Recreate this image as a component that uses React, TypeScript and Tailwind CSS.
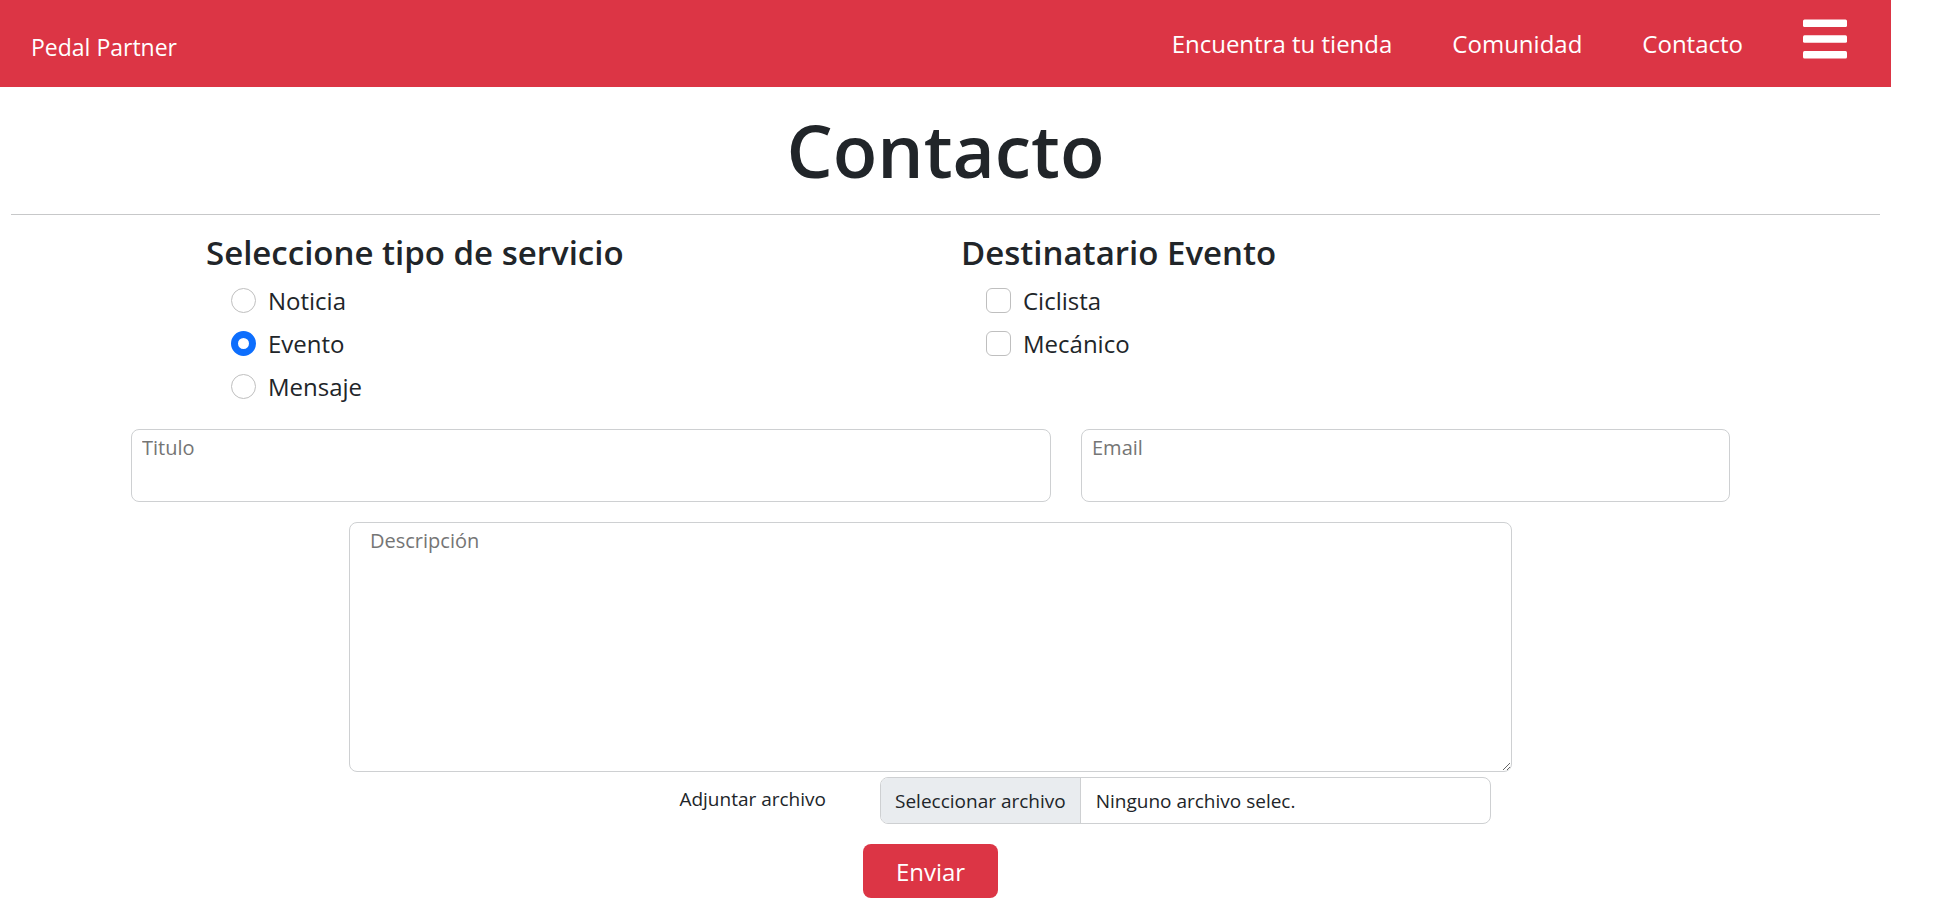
import { useState } from "react";

const NAV_LINKS = ["Encuentra tu tienda", "Comunidad", "Contacto"];
const SERVICES = ["Noticia", "Evento", "Mensaje"];
const RECIPIENTS = ["Ciclista", "Mecánico"];

function MenuIcon() {
  return (
    <svg viewBox="0 0 44 40" className="h-10 w-11" fill="currentColor" aria-hidden="true">
      <rect x="0" y="0.5" width="44" height="7.5" rx="1.5" />
      <rect x="0" y="16.2" width="44" height="7.5" rx="1.5" />
      <rect x="0" y="32" width="44" height="7.5" rx="1.5" />
    </svg>
  );
}

function Navbar() {
  return (
    <header className="flex h-[87px] items-start justify-between bg-[#dc3545] pr-11 pl-[31px] text-2xl leading-9 text-white">
      <a href="#inicio" className="pt-[29px] text-[23px] leading-9">
        Pedal Partner
      </a>
      <nav className="flex items-start gap-[60px]">
        {NAV_LINKS.map((label) => (
          <a key={label} href="#" className="pt-[26px]">
            {label}
          </a>
        ))}
        <button type="button" aria-label="Abrir menú" className="pt-[19px]">
          <MenuIcon />
        </button>
      </nav>
    </header>
  );
}

function ServiceOptions() {
  const [service, setService] = useState("Evento");
  return (
    <fieldset>
      <legend className="text-[33px] leading-10 font-semibold">Seleccione tipo de servicio</legend>
      <div className="flex flex-col pt-[7px] pl-[25px]">
        {SERVICES.map((name) => (
          <label key={name} className="flex h-[43px] items-start gap-3 text-2xl leading-[42px]">
            <input
              type="radio"
              name="servicio"
              checked={service === name}
              onChange={() => setService(name)}
              className="mt-2 size-[25px] shrink-0 appearance-none rounded-full border border-[#bfbfbf] bg-white checked:border-[7px] checked:border-[#0d6efd]"
            />
            {name}
          </label>
        ))}
      </div>
    </fieldset>
  );
}

function RecipientOptions() {
  return (
    <fieldset>
      <legend className="text-[33px] leading-10 font-semibold">Destinatario Evento</legend>
      <div className="flex flex-col pt-[7px] pl-[25px]">
        {RECIPIENTS.map((name) => (
          <label key={name} className="flex h-[43px] items-start gap-3 text-2xl leading-[42px]">
            <input
              type="checkbox"
              name="destinatario"
              className="mt-2 size-[25px] shrink-0 appearance-none rounded-md border border-[#bfbfbf] bg-white checked:border-[#0d6efd] checked:bg-[#0d6efd]"
            />
            {name}
          </label>
        ))}
      </div>
    </fieldset>
  );
}

const FIELD =
  "block w-full rounded-lg border border-[#ced0d2] bg-white text-xl leading-[30px] placeholder:text-[#757575] placeholder:opacity-100";

export default function App() {
  const [fileName, setFileName] = useState("Ninguno archivo selec.");
  return (
    <div className="bg-white pr-[52px] font-['Open_Sans','Noto_Sans',sans-serif] text-[#212529]">
      <Navbar />
      <main>
        <h1 className="pt-[17px] text-center text-[73px] leading-[92px] font-semibold">Contacto</h1>
        <hr className="mx-[11px] mt-[18px] border-[#c7c8c9]" />

        <form className="pr-[30px]" onSubmit={(event) => event.preventDefault()}>
          <div className="grid grid-cols-2 pt-[18px] pr-[145px] pl-[206px]">
            <ServiceOptions />
            <RecipientOptions />
          </div>

          <div className="mx-auto mt-5 grid w-full max-w-[1599px] grid-cols-[920fr_649fr] gap-[30px]">
            <input type="text" aria-label="Titulo" placeholder="Titulo" className={`${FIELD} h-[73px] px-[10px] pt-[2px] pb-[39px]`} />
            <input type="email" aria-label="Email" placeholder="Email" className={`${FIELD} h-[73px] px-[10px] pt-[2px] pb-[39px]`} />
          </div>

          <div className="mx-auto mt-5 w-full max-w-[1163px]">
            <textarea aria-label="Descripción" placeholder="Descripción" className={`${FIELD} h-[250px] resize px-5 pt-[3px]`} />
            <div className="mt-[5px] flex items-start justify-end gap-[54px] pr-[21px] text-[19px]">
              <label htmlFor="archivo" className="pt-2 leading-7">
                Adjuntar archivo
              </label>
              <div className="relative flex h-[47px] w-[611px] items-stretch overflow-hidden rounded-lg border border-[#ced0d2] leading-[47px]">
                <span className="border-r border-[#ced0d2] bg-[#e9ecef] px-[14px]">Seleccionar archivo</span>
                <span className="px-[15px]">{fileName}</span>
                <input
                  id="archivo"
                  type="file"
                  className="absolute inset-0 cursor-pointer opacity-0"
                  onChange={(event) => setFileName(event.target.files?.[0]?.name ?? "Ninguno archivo selec.")}
                />
              </div>
            </div>
          </div>

          <div className="mt-5 flex justify-center">
            <button type="submit" className="h-[54px] w-[135px] rounded-lg bg-[#dc3545] pt-0.5 text-2xl text-white">
              Enviar
            </button>
          </div>
        </form>
      </main>
    </div>
  );
}
